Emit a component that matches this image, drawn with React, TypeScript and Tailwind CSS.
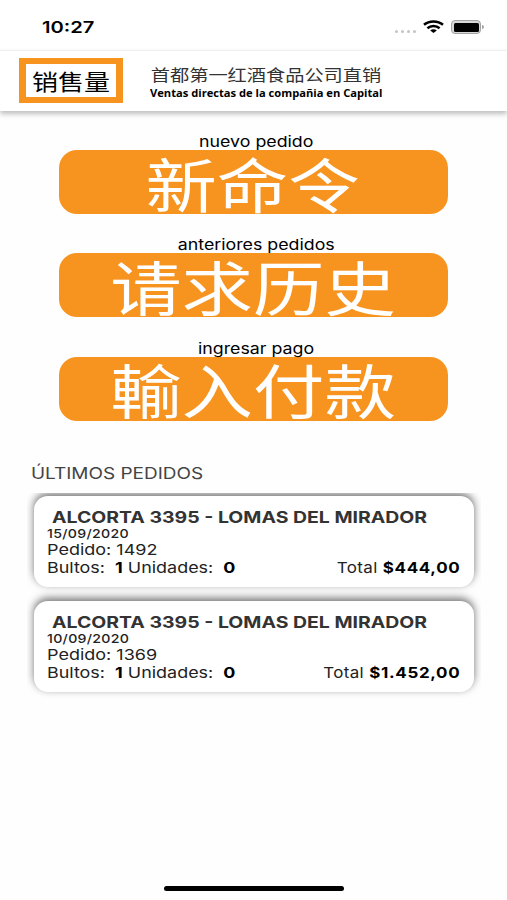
import React from "react";

interface Action {
	label: string;
	title: string;
}

interface Order {
	address: string;
	date: string;
	number: string;
	packages: number;
	units: number;
	total: string;
}

const actions: Action[] = [
	{ label: "nuevo pedido", title: "新命令" },
	{ label: "anteriores pedidos", title: "请求历史" },
	{ label: "ingresar pago", title: "輸入付款" },
];

const orders: Order[] = [
	{
		address: "ALCORTA 3395 - LOMAS DEL MIRADOR",
		date: "15/09/2020",
		number: "1492",
		packages: 1,
		units: 0,
		total: "$444,00",
	},
	{
		address: "ALCORTA 3395 - LOMAS DEL MIRADOR",
		date: "10/09/2020",
		number: "1369",
		packages: 1,
		units: 0,
		total: "$1.452,00",
	},
];

const StatusBar = () => (
	<div className="flex h-[50px] items-start justify-between bg-white pl-[42px] pr-[23px] pt-[18px]">
		<span className="inline-block origin-left scale-x-[1.26] text-[16px] font-semibold leading-[19px]">
			10:27
		</span>
		<div className="flex items-start">
			<div className="mr-[7px] mt-[12px] flex gap-[3px]">
				<i className="size-[3px] rounded-full bg-[#c4c4c4]" />
				<i className="size-[3px] rounded-full bg-[#c4c4c4]" />
				<i className="size-[3px] rounded-full bg-[#c4c4c4]" />
				<i className="size-[3px] rounded-full bg-[#c4c4c4]" />
			</div>
			<svg
				className="mr-[7px] mt-[2px]"
				width="21"
				height="13"
				viewBox="0 0 21 13"
				fill="none"
				stroke="#000"
				strokeWidth="2.5"
			>
				<path d="M1 4.800C6.200 .3 14.800 .3 20 4.800" />
				<path d="M4.400 8.300c3.400-3 8.800-3 12.200 0" />
				<path d="M7.200 10.400c1.900-1.500 4.700-1.500 6.600 0L10.500 13z" fill="#000" stroke="none" />
			</svg>
			<div className="mt-[2px] flex items-center gap-px">
				<div className="h-[14px] w-[30px] rounded-[4px] border border-[#a3a3a3] bg-[#d8d8d8] p-[1.5px]">
					<div className="h-full rounded-[1.5px] bg-black" />
				</div>
				<i className="h-1 w-[2px] rounded-r-full bg-[#a3a3a3]" />
			</div>
		</div>
	</div>
);

const Header = () => (
	<header className="flex h-[61px] items-start border-t border-[#f0f0f0] bg-white pl-[19px] pt-[7px] shadow-[0_3px_5px_rgba(0,0,0,0.25)]">
		<div className="flex h-[45px] w-[104px] items-center justify-center border-x-[7px] border-y-[6px] border-[#f7941f]">
			<span className="mt-[2px] scale-x-[1.18] whitespace-nowrap text-[22px] leading-[30px]">
				销售量
			</span>
		</div>
		<div className="ml-[26px] flex w-[234px] flex-col items-center whitespace-nowrap pt-[6px]">
			<span className="scale-x-[1.2] text-[16px] leading-[22px] text-[#333]">
				首都第一红酒食品公司直销
			</span>
			<span className="scale-x-[1.115] font-['Open_Sans','Noto_Sans',sans-serif] text-[10px] font-bold leading-[14px]">
				Ventas directas de la compañia en Capital
			</span>
		</div>
	</header>
);

const ActionButton = ({ label, title }: Action) => (
	<div className="flex h-[82px] w-[389px] flex-col items-center">
		<span className="ml-[5px] h-[18px] scale-x-[1.185] text-[15px] leading-[20px]">
			{label}
		</span>
		<button className="flex h-[64px] w-full items-center justify-center rounded-[18px] bg-[#f7941f] text-white">
			<span className="mr-px mt-[9px] scale-x-[1.21] whitespace-nowrap text-[59px] leading-[60px]">
				{title}
			</span>
		</button>
	</div>
);

const OrderCard = ({ order }: { order: Order }) => (
	<article className="h-[91px] rounded-[14px] bg-white pl-[13px] pr-[14px] pt-[11px] text-[#222] shadow-[0_-3px_8px_rgba(0,0,0,0.55)]">
		<h3 className="ml-[5px] w-fit origin-left scale-x-[1.215] whitespace-nowrap text-[16px] font-bold leading-[20px] text-[#333]">
			{order.address}
		</h3>
		<p className="w-fit origin-left scale-x-[1.18] text-[12px] font-medium leading-[14px] tracking-[0.25px]">
			{order.date}
		</p>
		<p className="w-fit origin-left scale-x-[1.2] text-[15px] leading-[18px]">
			Pedido: {order.number}
		</p>
		<div className="flex justify-between whitespace-pre text-[15px] leading-[18px]">
			<span className="origin-left scale-x-[1.195]">
				Bultos:{"  "}
				<b className="text-black">{order.packages}</b> Unidades:{"  "}
				<b className="text-black">{order.units}</b>
			</span>
			<span className="origin-right scale-x-[1.13] tracking-[0.3px]">
				Total{" "}
				<b className="-mr-[0.6px] tracking-[0.6px] text-black">{order.total}</b>
			</span>
		</div>
	</article>
);

const App = () => {
	return (
		<main className="flex h-[900px] w-[507px] flex-col overflow-hidden bg-[#fefefe] font-['Inter','Noto_Sans_CJK_SC',sans-serif] text-black">
			<StatusBar />
			<Header />
			<section className="ml-[59px] mt-[21px] flex flex-col gap-[21.3px]">
				{actions.map((action) => (
					<ActionButton key={action.label} {...action} />
				))}
			</section>
			<h2 className="ml-[31px] mt-[42.4px] h-[20px] w-fit origin-left scale-x-[1.185] text-[16px] leading-[20px] text-[#444]">
				ÚLTIMOS PEDIDOS
			</h2>
			<section className="ml-[27px] mt-[10px] flex w-[454px] flex-col gap-[14px] overflow-hidden px-[7px] pb-[10px] pt-[3px]">
				{orders.map((order) => (
					<OrderCard key={order.number} order={order} />
				))}
			</section>
			<div className="mb-[9px] ml-[164px] mt-auto h-[5px] w-[180px] rounded-full bg-black" />
		</main>
	);
};

export default App;
